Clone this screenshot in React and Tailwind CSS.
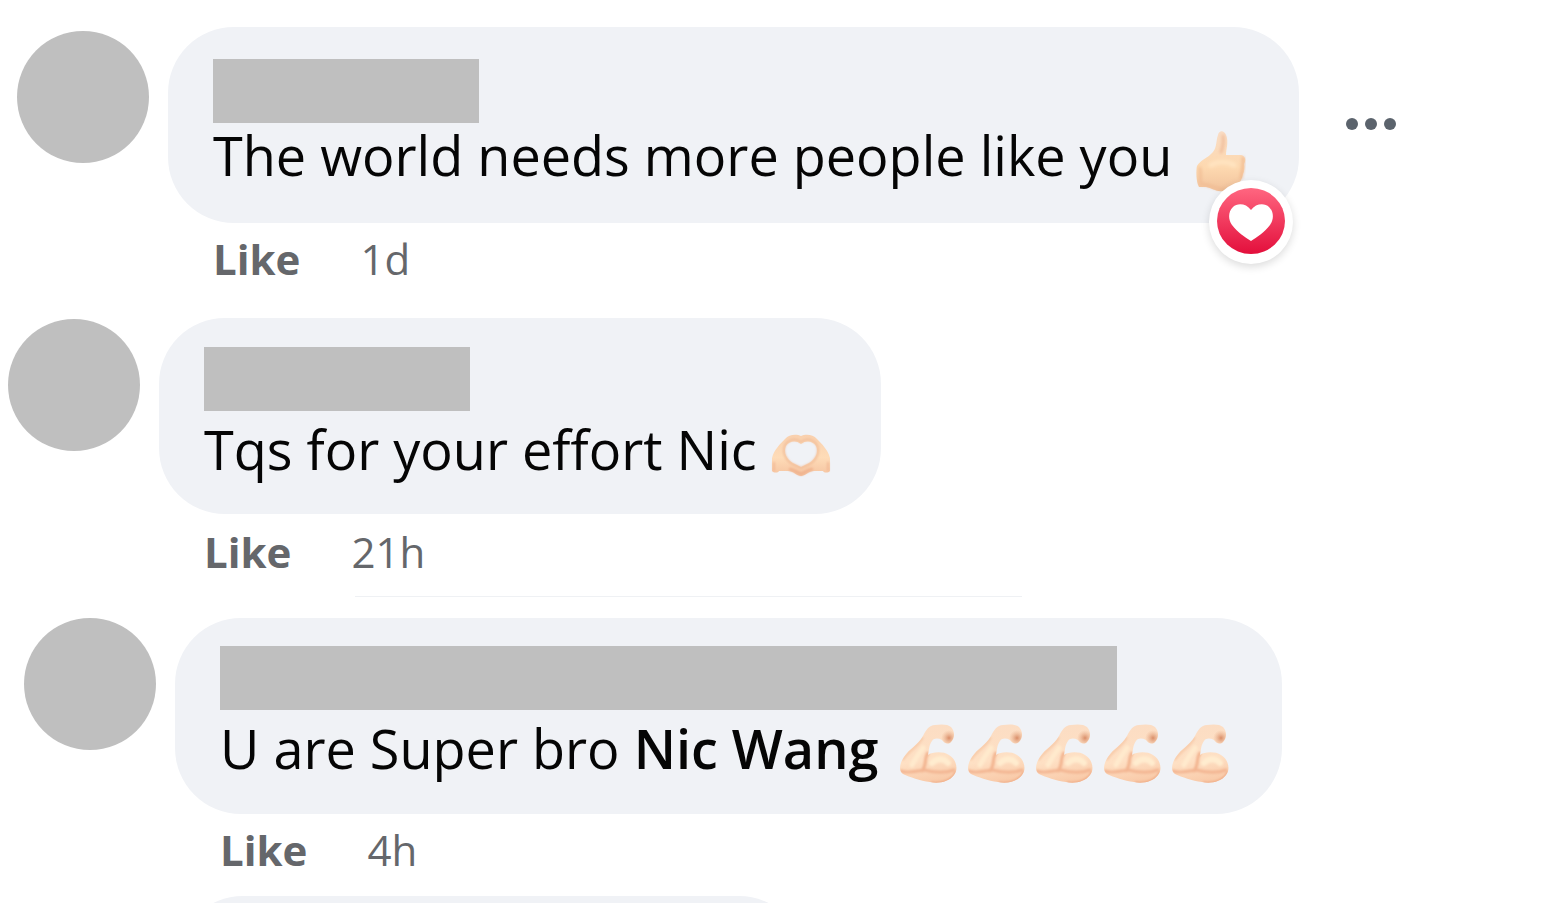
import React from "react";

function ThumbsUp() {
  return (
    <svg role="img" aria-label="thumbs up" viewBox="0 0 50 62" className="h-[62px] w-[50px] shrink-0">
      <defs>
        <linearGradient id="thumbSkin" x1="0" y1="0" x2="0" y2="1">
          <stop offset="0" stopColor="#f9dcc4" />
          <stop offset="0.6" stopColor="#fdd9b0" />
          <stop offset="1" stopColor="#f1c29c" />
        </linearGradient>
        <filter id="thumbSoft" x="-20%" y="-20%" width="140%" height="140%">
          <feGaussianBlur stdDeviation="1.4" />
        </filter>
      </defs>
      <path
        d="M22 5 C23 0 28 0 30 5 C33 12 30 19 30 25 L45 25 C50 26 50 31 48 34 C49 38 48 42 47 44 C46 48 45 52 42 54 C39 58 31 59 27 61 C20 62 16 58 10 57 L3 57 C0 52 0 40 1 36 C4 30 12 28 17 22 C21 17 20 10 22 5 Z"
        fill="url(#thumbSkin)"
      />
      <g filter="url(#thumbSoft)" fill="none" strokeLinecap="round">
        <path d="M27 6 C28 12 27 17 25 22" stroke="#eeb793" strokeWidth="3" opacity="0.8" />
        <path d="M47 28 C48 34 46 42 45 48" stroke="#efb58c" strokeWidth="3" opacity="0.8" />
        <path d="M4 38 C5 43 4 49 5 54 C14 54 20 60 28 59" stroke="#efb990" strokeWidth="3" opacity="0.7" />
        <path d="M15 35 C22 31 31 31 38 35" stroke="#ffe3bf" strokeWidth="5" />
      </g>
    </svg>
  );
}

function HeartHands() {
  return (
    <svg role="img" aria-label="heart hands" viewBox="0 0 60 44" className="h-[44px] w-[60px] shrink-0">
      <defs>
        <linearGradient id="handSkin" x1="0" y1="0" x2="0" y2="1">
          <stop offset="0" stopColor="#f9d0ae" />
          <stop offset="0.55" stopColor="#fedcb8" />
          <stop offset="1" stopColor="#f5c3a0" />
        </linearGradient>
        <filter id="handSoft" x="-10%" y="-10%" width="120%" height="120%">
          <feGaussianBlur stdDeviation="0.8" />
        </filter>
      </defs>
      <path
        fillRule="evenodd"
        d="M1 25 C3 17 9 11 14 6 C18 1 26 1 30 3 C34 1 42 1 46 6 C51 11 57 17 59 25 L59 38 C57 40 53 40 52 38 L43 38 C38 38 34 43 30 43 C26 43 22 38 17 38 L8 38 C7 40 3 40 1 38 Z M30 11 C25 7 18 8 15 13 C12 20 16 26 22 30 L30 34 L38 30 C44 26 48 20 45 13 C42 8 35 7 30 11 Z"
        fill="url(#handSkin)"
      />
      <g filter="url(#handSoft)" fill="none">
        <path d="M30 9 C25 5 18 6 14 12 C11 20 15 27 21 31 L30 35 L39 31 C45 27 49 20 46 12 C42 6 35 5 30 9 Z" stroke="#efb995" strokeWidth="2" opacity="0.8" />
        <path d="M18 36 C24 37 27 40 30 41 C33 40 36 37 42 36" stroke="#eead88" strokeWidth="3" opacity="0.8" />
        <path d="M3 29 V38 M57 29 V38" stroke="#f0b38e" strokeWidth="2" opacity="0.8" />
      </g>
    </svg>
  );
}

function Biceps() {
  return (
    <svg role="img" aria-label="flexed biceps" viewBox="0 0 68 60" className="h-[60px] w-[68px] shrink-0">
      <defs>
        <linearGradient id="armSkin" x1="0" y1="0" x2="0.2" y2="1">
          <stop offset="0" stopColor="#fbdcc3" />
          <stop offset="0.65" stopColor="#fee0c4" />
          <stop offset="1" stopColor="#f9cbaa" />
        </linearGradient>
        <radialGradient id="knuckle">
          <stop offset="0" stopColor="#d98d68" />
          <stop offset="1" stopColor="#eab08c" stopOpacity="0" />
        </radialGradient>
        <clipPath id="armShape">
          <path d="M25 12 C28 6 31 1 37 1 C43 0 50 0 53 3 C57 7 57 14 53 18 C50 21 46 19 44 16 C40 14 36 14 34 17 C31 21 31 26 30 31 C34 28 45 27 51 31 C58 35 61 45 56 51 C51 58 40 60 32 58 C22 57 12 53 5 50 C0 46 2 39 6 33 C11 25 20 21 25 12 Z" />
        </clipPath>
        <filter id="armSoft" x="-20%" y="-20%" width="140%" height="140%">
          <feGaussianBlur stdDeviation="1.3" />
        </filter>
      </defs>
      <g clipPath="url(#armShape)">
        <rect width="68" height="60" fill="url(#armSkin)" />
        <g filter="url(#armSoft)" fill="none" strokeLinecap="round">
          <path d="M30 29 C26 34 29 41 24 47" stroke="#f2b28e" strokeWidth="3" />
          <path d="M3 47 C10 50 18 47 26 46 C34 48 46 50 56 46" stroke="#f3b592" strokeWidth="3" />
          <path d="M34 59 C44 60 54 57 58 49" stroke="#efab85" strokeWidth="3" />
          <path d="M24 14 C20 22 10 27 5 35" stroke="#f8ccab" strokeWidth="3" />
          <path d="M34 39 C39 34 46 34 50 39" stroke="#ffeccf" strokeWidth="6" />
          <path d="M25 24 C20 31 17 35 14 41" stroke="#ffeacd" strokeWidth="5" />
        </g>
        <circle cx="51" cy="14" r="8" fill="url(#knuckle)" />
      </g>
    </svg>
  );
}

function LoveReaction() {
  return (
    <span className="absolute -bottom-[41px] right-[6px] flex size-[84px] items-center justify-center rounded-full bg-white shadow-[0_3px_8px_rgba(0,0,0,0.14)]">
      <svg role="img" aria-label="Love reaction" viewBox="0 0 68 68" className="size-[68px]">
        <defs>
          <linearGradient id="love" x1="0" y1="0" x2="0" y2="1">
            <stop offset="0" stopColor="#ff6680" />
            <stop offset="1" stopColor="#e30f3c" />
          </linearGradient>
        </defs>
        <ellipse cx="34" cy="33" rx="34" ry="33" fill="url(#love)" />
        <path
          d="M34 22 C39 15 48 15 52 19 C57 24 57 31 53 37 C47 45 40 49 34 53 C28 49 21 45 15 37 C11 31 11 24 16 19 C20 15 29 15 34 22 Z"
          fill="#fff"
        />
      </svg>
    </span>
  );
}

function Comment({ className, avatarClass, bubbleClass, nameClass, footerClass, time, reaction, menu, children }) {
  return (
    <article className={`flex items-start ${className}`}>
      <div className={`mr-[19px] size-[132px] shrink-0 rounded-full bg-[#bfbfbf] ${avatarClass}`} />
      <div className="min-w-0">
        <div className="flex items-start">
          <div className={`relative h-[196px] rounded-[66px] bg-[#f0f2f6] pl-[45px] ${bubbleClass}`}>
            <div className={`h-16 bg-[#bfbfbf] ${nameClass}`} />
            <p className="flex h-16 items-center whitespace-pre text-[54px] leading-[64px] text-[#050505]">{children}</p>
            {reaction}
          </div>
          {menu}
        </div>
        <footer className={`flex items-center gap-[60px] pl-[45px] text-[42px] leading-[56px] text-[#65676b] ${footerClass}`}>
          <button type="button" className="font-bold">Like</button>
          <time>{time}</time>
        </footer>
      </div>
    </article>
  );
}

export default function App() {
  return (
    <main className="h-screen overflow-hidden bg-white pt-[27px] font-['Open_Sans','Noto_Sans',sans-serif]">
      <Comment
        className="h-[291px] pl-[17px]"
        avatarClass="mt-1"
        bubbleClass="w-[1131px] pt-8"
        nameClass="w-[266px]"
        footerClass="mt-2"
        time="1d"
        reaction={<LoveReaction />}
        menu={
          <button type="button" aria-label="More options" className="ml-[45px] mt-[89px] shrink-0">
            <svg viewBox="0 0 54 16" className="h-4 w-[54px]" fill="#5b636c">
              <circle cx="8" cy="8" r="6" />
              <circle cx="27" cy="8" r="6" />
              <circle cx="46" cy="8" r="6" />
            </svg>
          </button>
        }
      >
        <span>The world needs more people like you</span>
        <span className="ml-6 pt-3"><ThumbsUp /></span>
      </Comment>

      <Comment
        className="h-[278px] pl-2"
        avatarClass="mt-px"
        bubbleClass="w-[722px] pt-[29px]"
        nameClass="mb-1.5 w-[266px]"
        footerClass="mt-2.5"
        time="21h"
      >
        <span>Tqs for your effort Nic</span>
        <span className="ml-3.5 pt-3"><HeartHands /></span>
      </Comment>

      <hr className="mb-[21px] ml-[355px] w-[667px] border-[#eff1f4]" />

      <Comment
        className="h-[278px] pl-6"
        avatarClass=""
        bubbleClass="w-[1107px] pt-7"
        nameClass="mb-1.5 w-[897px]"
        footerClass="mt-2"
        time="4h"
      >
        <span>U are Super bro <span className="font-semibold">Nic Wang</span></span>
        <span className="ml-5 flex pt-3"><Biceps /><Biceps /><Biceps /><Biceps /><Biceps /></span>
      </Comment>

      <div className="ml-[177px] h-[196px] w-[628px] rounded-[66px] bg-[#f0f2f6]" />
    </main>
  );
}
